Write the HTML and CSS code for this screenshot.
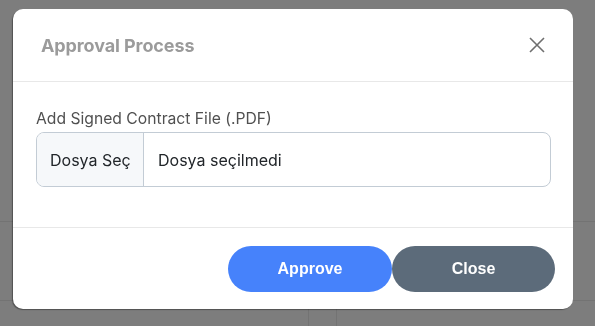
FILE: index.html
```html
<!DOCTYPE html>
<html lang="en">

<head>
    <meta charset="UTF-8">
    <meta name="viewport" content="width=device-width, initial-scale=1.0">
    <title>Approval Process</title>
    <link rel="stylesheet" href="styles.css">
</head>

<body>
    <!-- page behind the overlay -->
    <div class="backdrop">
        <div class="backdrop-row"></div>
        <div class="backdrop-row bottom">
            <div class="backdrop-cell"></div>
            <div class="backdrop-cell narrow"></div>
        </div>
    </div>

    <div class="modal">
        <div class="modal-header">
            <h5 class="modal-title">Approval Process</h5>
            <button type="button" class="close-btn" aria-label="Close">
                <svg width="16" height="16" viewBox="0 0 16 16">
                    <path d="M1 1 L15 15 M15 1 L1 15" stroke="#6f6f6f" stroke-width="1.6" fill="none" />
                </svg>
            </button>
        </div>

        <div class="modal-body">
            <label for="contract">Add Signed Contract File (.PDF)</label>
            <div class="file-input">
                <span class="file-btn">Dosya Seç</span>
                <span class="file-name">Dosya seçilmedi</span>
            </div>
        </div>

        <div class="modal-footer">
            <button type="button" class="btn btn-approve">Approve</button>
            <button type="button" class="btn btn-close">Close</button>
        </div>
    </div>
</body>

</html>
```

FILE: styles.css
```css
body {
    margin: 0;
    padding: 0;
    background-color: #7d7d7d;
    font-family: Inter, "Noto Sans", sans-serif;
    height: 326px;
    overflow: hidden;
}

.backdrop {
    height: 326px;
    display: flex;
    flex-direction: column;
}

.backdrop-row {
    height: 221px;
    border-bottom: 1px solid #737373;
}

.backdrop-row.bottom {
    height: 78px;
    flex: none;
    display: flex;
    border-bottom: 1px solid #737373;
}

.backdrop-cell {
    width: 308px;
}

.backdrop-cell.narrow {
    width: 27px;
    margin-top: 79px;
    border-left: 1px solid #737373;
    border-right: 1px solid #737373;
    height: 30px;
}

.modal {
    position: fixed;
    left: 13px;
    top: 9px;
    width: 560px;
    height: 300px;
    background-color: #ffffff;
    border-radius: 10px;
    box-shadow: -1px 1px 1px rgba(0, 0, 0, 0.35);
    display: flex;
    flex-direction: column;
    box-sizing: border-box;
}

.modal-header {
    height: 73px;
    flex: none;
    box-sizing: border-box;
    padding: 0 28px;
    display: flex;
    align-items: center;
    justify-content: space-between;
    border-bottom: 1px solid #e8e8e8;
}

.modal-title {
    margin: 0;
    font-size: 18px;
    font-weight: 700;
    color: #9b9b9b;
    letter-spacing: -0.1px;
}

.close-btn {
    border: none;
    background: none;
    padding: 0;
    width: 16px;
    height: 16px;
    cursor: pointer;
    display: flex;
}

.modal-body {
    height: 146px;
    flex: none;
    box-sizing: border-box;
    padding: 28px 22px 0 23px;
    border-bottom: 1px solid #e8e8e8;
}

.modal-body label {
    display: block;
    font-size: 15.7px;
    line-height: 18px;
    color: #505050;
    margin-bottom: 4px;
}

.file-input {
    height: 55px;
    box-sizing: border-box;
    border: 1px solid #c3ccd5;
    border-radius: 8px;
    display: flex;
    align-items: stretch;
    overflow: hidden;
    font-size: 16px;
    color: #212529;
}

.file-btn {
    width: 107px;
    box-sizing: border-box;
    background-color: #f6f8fa;
    border-right: 1px solid #c3ccd5;
    display: flex;
    align-items: center;
    padding-left: 13px;
}

.file-name {
    display: flex;
    align-items: center;
    padding-left: 14px;
}

.modal-footer {
    flex: 1;
    display: flex;
    justify-content: flex-end;
    align-items: flex-start;
    padding: 18px 18px 0 0;
}

.btn {
    width: 164px;
    height: 46px;
    border: none;
    border-radius: 23px;
    color: #ffffff;
    font-family: "Liberation Sans", Arial, sans-serif;
    font-size: 16px;
    font-weight: bold;
    cursor: pointer;
}

.btn-approve {
    background-color: #4682fb;
}

.btn-close {
    width: 163px;
    background-color: #5c6b7a;
}
```
